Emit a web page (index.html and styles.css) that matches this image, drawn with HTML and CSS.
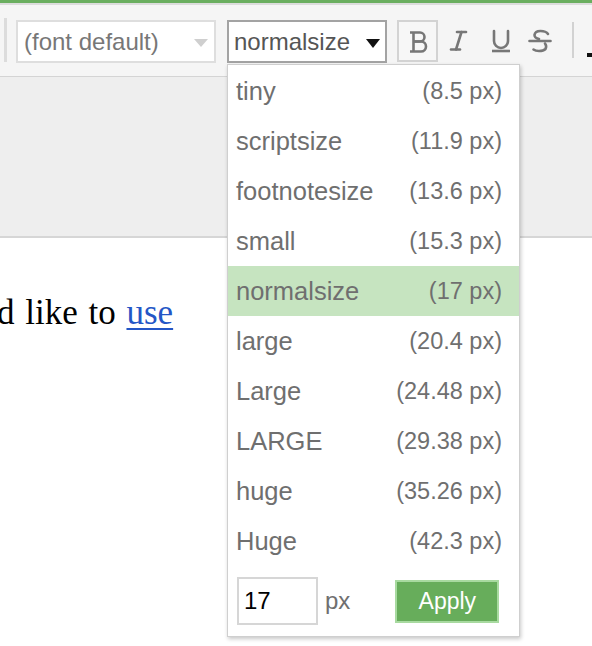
FILE: index.html
```html
<!DOCTYPE html>
<html>
<head>
<meta charset="utf-8">
<link rel="stylesheet" href="styles.css">
</head>
<body>
<div class="page">
  <div class="topbar"></div>
  <div class="toolbar">
    <div class="sep sep-left"></div>
    <div class="select font-select">
      <span class="select-text">(font default)</span>
      <span class="tri tri-light"></span>
    </div>
    <div class="select size-select">
      <span class="select-text dark">normalsize</span>
      <span class="tri tri-dark"></span>
    </div>
    <div class="btn btn-active">
      <svg width="20" height="22" viewBox="0 0 20 22" fill="none" stroke="#777" stroke-width="2.6" stroke-linejoin="round">
        <path d="M1 1.5 H11 a4.5 4.5 0 0 1 0 9 H4.5"/>
        <path d="M4.5 1.5 V20.5"/>
        <path d="M4.5 10.5 H12 a5 5 0 0 1 0 10 H1"/>
      </svg>
    </div>
    <div class="btn">
      <svg width="20" height="22" viewBox="0 0 20 22" fill="none" stroke="#777" stroke-width="2.6" stroke-linecap="round">
        <path d="M8 2 H17"/>
        <path d="M12.5 2 L7 19.5"/>
        <path d="M2 19.5 H11"/>
      </svg>
    </div>
    <div class="btn">
      <svg width="22" height="24" viewBox="0 0 22 24" fill="none" stroke="#777" stroke-width="2.6" stroke-linecap="round">
        <path d="M4 2 V12 a7 7 0 0 0 14 0 V2"/>
        <path d="M2 22 H20" stroke-linecap="butt"/>
      </svg>
    </div>
    <div class="btn btn-strike">
      <svg width="24" height="24" viewBox="0 0 24 24" fill="none" stroke="#777" stroke-width="2.6" stroke-linecap="round">
        <path d="M20 5 Q18 2 12.5 2 Q7 2 6.5 6 Q6.5 9 11 10"/>
        <path d="M1.5 12 H22.5"/>
        <path d="M17 14.5 Q19 17 17.5 20 Q15.5 22 11 22 Q7.5 22 5.5 20.5"/>
      </svg>
    </div>
    <div class="sep sep-right"></div>
    <div class="edge-bit"></div>
  </div>
  <div class="graybar"></div>
  <div class="content">
    <p class="text">d like to <a class="link" href="#">use</a></p>
  </div>

  <div class="menu">
    <ul class="items">
      <li class="item"><span class="label">tiny</span><span class="px">(8.5 px)</span></li>
      <li class="item"><span class="label">scriptsize</span><span class="px">(11.9 px)</span></li>
      <li class="item"><span class="label">footnotesize</span><span class="px">(13.6 px)</span></li>
      <li class="item"><span class="label">small</span><span class="px">(15.3 px)</span></li>
      <li class="item selected"><span class="label">normalsize</span><span class="px">(17 px)</span></li>
      <li class="item"><span class="label">large</span><span class="px">(20.4 px)</span></li>
      <li class="item"><span class="label">Large</span><span class="px">(24.48 px)</span></li>
      <li class="item"><span class="label">LARGE</span><span class="px">(29.38 px)</span></li>
      <li class="item"><span class="label">huge</span><span class="px">(35.26 px)</span></li>
      <li class="item"><span class="label">Huge</span><span class="px">(42.3 px)</span></li>
    </ul>
    <div class="footer">
      <div class="input">17</div>
      <span class="unit">px</span>
      <div class="apply">Apply</div>
    </div>
  </div>
</div>
</body>
</html>
```

FILE: styles.css
```css
* { box-sizing: border-box; }
html, body { margin: 0; padding: 0; }
body {
  width: 592px;
  height: 646px;
  overflow: hidden;
  background: #fff;
  font-family: "Liberation Sans", Arial, sans-serif;
}
.page { position: relative; width: 592px; height: 646px; overflow: hidden; }

.topbar {
  height: 5px;
  background: #6aae5f;
  border-bottom: 2px solid #dcdcdc;
}

.toolbar {
  height: 72px;
  background: #f5f5f5;
  border-bottom: 1px solid #d4d4d4;
  display: flex;
  align-items: flex-start;
  padding-top: 15px;
  padding-left: 4px;
  overflow: hidden;
}
.toolbar > * { flex-shrink: 0; }
.sep { width: 3px; background: #dcdcdc; }
.sep-left { height: 44px; margin-top: -2px; margin-right: 9px; }
.sep-right { width: 2px; height: 36px; margin-top: 2px; margin-left: 11px; background: #d2d2d2; }
.edge-bit { width: 6px; height: 4px; background: #111; margin-top: 33px; margin-left: 13px; }

.select {
  height: 43px;
  background: #fff;
  display: flex;
  align-items: center;
  justify-content: space-between;
}
.font-select {
  width: 200px;
  border: 2px solid #dedede;
  padding: 0 6px 0 6px;
}
.size-select {
  width: 160px;
  margin-left: 11px;
  border: 2px solid #a3a3a3;
  padding: 0 5px 0 5px;
}
.select-text { font-size: 24px; color: #777; }
.select-text.dark { color: #555; }
.tri { width: 0; height: 0; border-left: 7.5px solid transparent; border-right: 7.5px solid transparent; }
.tri-light { border-top: 8px solid #cfcfcf; margin-top: 3px; }
.tri-dark { border-top: 9px solid #111; margin-top: 3px; }

.btn {
  width: 42px;
  height: 42px;
  display: flex;
  align-items: center;
  justify-content: center;
  border: 2px solid transparent;
}
.btn-active {
  margin-left: 10px;
  width: 41px;
  border-color: #d3d3d3;
  background: #f7f7f7;
}
.btn-active svg { margin-left: 2px; margin-top: 1px; }
.btn-strike { margin-left: -3px; }

.graybar {
  height: 161px;
  background: #eeeeee;
  border-bottom: 2px solid #d6d6d6;
}

.content { padding-top: 55px; }
.text {
  margin: 0 0 0 -3px;
  font-family: "Liberation Serif", "Times New Roman", serif;
  font-size: 35px;
  line-height: 40px;
  color: #000;
  word-spacing: 2px;
  white-space: nowrap;
}
.link { color: #2456c6; text-decoration: underline; text-decoration-thickness: 2px; text-underline-offset: 4px; }

.menu {
  position: absolute;
  left: 227px;
  top: 64px;
  width: 293px;
  height: 573px;
  background: #fff;
  border: 1px solid #cfcfcf;
  box-shadow: 1px 2px 4px rgba(0,0,0,0.22);
  padding-top: 1px;
}
.items { list-style: none; margin: 0; padding: 0; }
.item {
  height: 50px;
  display: flex;
  align-items: center;
  justify-content: space-between;
  padding: 0 17px 0 8px;
  color: #6f6f6f;
}
.item.selected { background: #c6e4c0; }
.label { font-size: 25.5px; }
.px { font-size: 23.5px; }

.footer {
  display: flex;
  align-items: center;
  padding: 11px 0 0 9px;
}
.input {
  width: 81px;
  height: 48px;
  border: 2px solid #d6d6d6;
  font-size: 24px;
  color: #000;
  display: flex;
  align-items: center;
  padding-left: 5px;
}
.unit { font-size: 24px; color: #6f6f6f; margin-left: 7px; }
.apply {
  margin-left: 45px;
  margin-top: 1px;
  width: 104px;
  height: 43px;
  background: #67ad5b;
  border: 2px solid #a8daa0;
  color: #fff;
  font-size: 23px;
  display: flex;
  align-items: center;
  justify-content: center;
}
```
